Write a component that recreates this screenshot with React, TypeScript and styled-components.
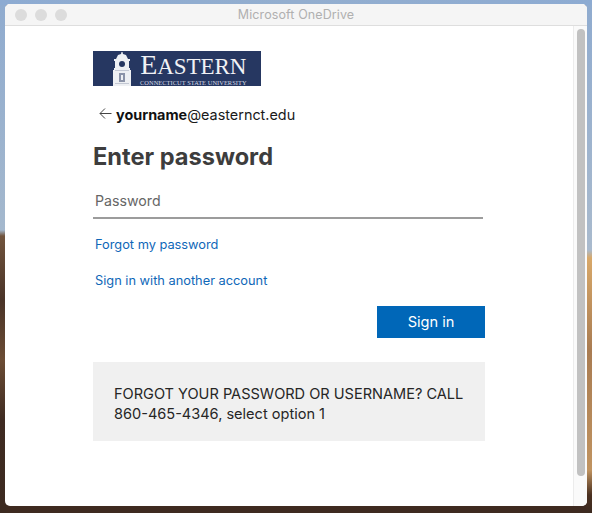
import styled, { createGlobalStyle } from 'styled-components';

const GlobalStyle = createGlobalStyle`
    html, body {
        margin: 0;
        padding: 0;
    }

    * {
        box-sizing: border-box;
    }
`;

const Desktop = styled.div`
    width: 592px;
    height: 513px;
    padding: 4px 5px 7px 5px;
    overflow: hidden;
    background:
        linear-gradient(90deg, #8dabd2, #93aecf 50%, #8dabd2) left top / 100% 5px no-repeat,
        linear-gradient(180deg, #8fabcf 0, #a4b8cd 230px, #71543d 236px, #4a3428 300px, #6b4c34 360px, #3f2b22 420px, #3c2a20 513px) left top / 6px 100% no-repeat,
        linear-gradient(180deg, #8fabcf 0, #a9bacd 250px, #d8a869 258px, #a97c52 350px, #c09360 470px, #4a3020 495px, #3c2a20 513px) right top / 6px 100% no-repeat,
        #3e2a20;
`;

const Window = styled.div`
    width: 582px;
    height: 502px;
    display: flex;
    flex-direction: column;
    border-radius: 5px;
    overflow: hidden;
    background: #fff;
    font-family: Inter, 'Liberation Sans', sans-serif;
`;

const TitleBar = styled.div`
    position: relative;
    flex: 0 0 22px;
    display: flex;
    align-items: center;
    justify-content: center;
    gap: 8px;
    background: #f5f5f5;
    border-bottom: 1px solid #dedede;
`;

const Lights = styled.div`
    position: absolute;
    left: 10px;
    top: 5px;
    display: flex;
    gap: 8px;
`;

const Light = styled.span`
    width: 12px;
    height: 12px;
    border-radius: 50%;
    background: #dcdcdc;
`;

const WindowTitle = styled.div`
    font-size: 12.5px;
    letter-spacing: 0.1px;
    color: #b0b0b0;
`;

const Body = styled.div`
    flex: 1;
    display: flex;
    min-height: 0;
`;

const Content = styled.main`
    flex: 1;
    padding: 25px 0 0 88px;
`;

const Card = styled.div`
    width: 392px;
    display: flex;
    flex-direction: column;
`;

const Logo = styled.div`
    width: 168px;
    height: 35px;
    display: flex;
    align-items: flex-end;
    gap: 7px;
    padding-left: 18px;
    background: #263761;
    color: #f1f2f5;
    font-family: 'Liberation Serif', serif;
`;

const LogoWords = styled.div`
    display: flex;
    flex-direction: column;
    align-items: center;
`;

const LogoName = styled.div`
    font-size: 23px;
    line-height: 24px;
    letter-spacing: -0.1px;
    white-space: nowrap;
`;

const LogoCap = styled.span`
    font-size: 28px;
`;

const LogoSub = styled.div`
    font-size: 6.4px;
    line-height: 7px;
    white-space: nowrap;
    letter-spacing: 0.05px;
    color: #d5d9e3;
`;

const Identity = styled.div`
    margin: 18px 0 0 6px;
    height: 20px;
    display: flex;
    align-items: center;
    gap: 4px;
    font-size: 14.4px;
    color: #1a1a1a;
`;

const BackIcon = styled.svg`
    width: 13px;
    height: 13px;
    margin-bottom: 2px;
    fill: none;
    stroke: #444;
    stroke-width: 1;
`;

const Address = styled.div`
    white-space: nowrap;
`;

const UserName = styled.span`
    font-weight: 700;
    color: #111;
`;

const Heading = styled.h1`
    margin: 18px 0 0 0;
    font-size: 23.6px;
    line-height: 30px;
    font-weight: 700;
    color: #3d3d3d;
`;

const PasswordField = styled.div`
    width: 390px;
    height: 32px;
    margin-top: 15px;
    padding: 4px 0 0 2px;
    font-size: 14.2px;
    line-height: 20px;
    color: #666;
    border-bottom: 2px solid #9c9c9c;
`;

const TextLink = styled.a<{ $top: number }>`
    display: block;
    margin: ${p => p.$top}px 0 0 2px;
    font-size: 12.8px;
    line-height: 18px;
    color: #0f67b8;
    text-decoration: none;
`;

const Actions = styled.div`
    display: flex;
    justify-content: flex-end;
    margin-top: 16px;
`;

const SignInButton = styled.button`
    width: 108px;
    height: 32px;
    padding: 0;
    border: none;
    background: #0067b8;
    color: #fff;
    font-family: inherit;
    font-size: 14.6px;
`;

const HelpPanel = styled.div`
    height: 79px;
    margin-top: 24px;
    padding: 22px 20px 0 21px;
    background: #f0f0f0;
    font-size: 14.55px;
    line-height: 20px;
    color: #262626;
`;

const ScrollTrack = styled.div`
    flex: 0 0 14px;
    padding: 3px 2px 0 3px;
    background: #fafafa;
    border-left: 1px solid #ececec;
`;

const ScrollThumb = styled.div`
    height: 447px;
    border-radius: 4px;
    background: #c1c1c1;
`;

const Tower = () => (
    <svg width="22" height="34" viewBox="3 0 20 34">
        <path fill="#eef0f3" d="M12.5 0h1l.5 2 3 1 2 4h2v2h-1v7h1v2h1v16H4V18h1v-2h1V9H5V7h2l2-4 3-1z" />
        <circle cx="13" cy="12" r="3" fill="#263761" />
        <path fill="#8b93a8" d="M10 21h6v9h-6z" />
        <path fill="#eef0f3" d="M12 23h2v5h-2z" />
        <path fill="#c3c8d3" d="M6 18h14v1H6zM6 31h14v1H6z" />
    </svg>
);

export default function App() {
    return (
        <Desktop>
            <GlobalStyle />
            <Window>
                <TitleBar>
                    <Lights>
                        <Light />
                        <Light />
                        <Light />
                    </Lights>
                    <WindowTitle>Microsoft OneDrive</WindowTitle>
                </TitleBar>
                <Body>
                    <Content>
                        <Card>
                            <Logo>
                                <Tower />
                                <LogoWords>
                                    <LogoName>
                                        <LogoCap>E</LogoCap>ASTERN
                                    </LogoName>
                                    <LogoSub>CONNECTICUT STATE UNIVERSITY</LogoSub>
                                </LogoWords>
                            </Logo>
                            <Identity>
                                <BackIcon viewBox="0 0 13 13">
                                    <path d="M12.5 6.5H1M6 1.5l-5 5 5 5" />
                                </BackIcon>
                                <Address>
                                    <UserName>yourname</UserName>@easternct.edu
                                </Address>
                            </Identity>
                            <Heading>Enter password</Heading>
                            <PasswordField>Password</PasswordField>
                            <TextLink $top={17}>Forgot my password</TextLink>
                            <TextLink $top={18}>Sign in with another account</TextLink>
                            <Actions>
                                <SignInButton>Sign in</SignInButton>
                            </Actions>
                            <HelpPanel>
                                FORGOT YOUR PASSWORD OR USERNAME? CALL 860-465-4346, select option 1
                            </HelpPanel>
                        </Card>
                    </Content>
                    <ScrollTrack>
                        <ScrollThumb />
                    </ScrollTrack>
                </Body>
            </Window>
        </Desktop>
    );
}
